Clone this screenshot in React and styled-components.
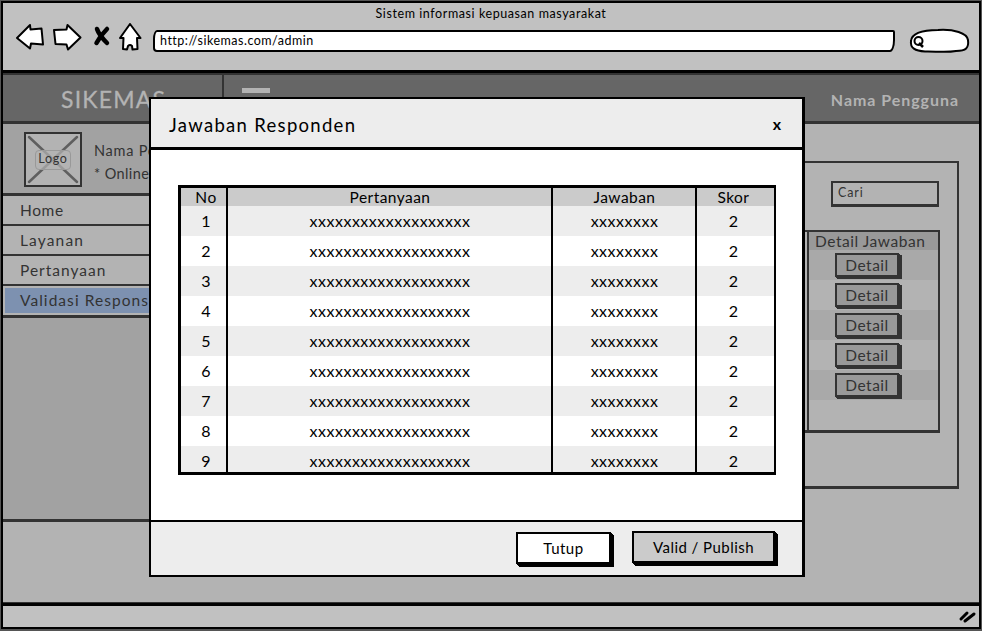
import React from "react";
import styled, { createGlobalStyle } from "styled-components";

const Global = createGlobalStyle`
  *, *::before, *::after { box-sizing: border-box; }
  body { margin: 0; background: #fff; overflow: hidden; }
  body, button, input { font-family: Lato, "Open Sans", sans-serif; }
`;

const Text = styled.span`
  display: block;
  white-space: nowrap;
  font-size: ${(p) => p.$size || 16}px;
  letter-spacing: ${(p) => p.$ls || 0}px;
  font-weight: ${(p) => p.$weight || 400};
  line-height: 20px;
`;

/* Browser window */
const Window = styled.div`
  width: 982px;
  height: 631px;
  padding: 1px 1px 2px;
  background: #555;
`;
const Frame = styled.div`
  position: relative;
  width: 980px;
  height: 628px;
  border: 2px solid #000;
  display: flex;
  flex-direction: column;
  overflow: hidden;
`;
const Chrome = styled.header`
  height: 70px;
  flex: none;
  background: #c1c1c1;
  border-bottom: 3px solid #000;
`;
const WindowTitle = styled.div`
  height: 20px;
  display: flex;
  justify-content: center;

  ${Text} { line-height: 22px; }
`;
const Toolbar = styled.div`
  display: flex;
  align-items: flex-start;
  height: 40px;
`;
const NavIcons = styled.svg`
  display: block;
  width: 150px;
  height: 40px;
  flex: none;
`;
const AddressBar = styled.div`
  margin: 7px 0 0 0;
  width: 742px;
  height: 22px;
  border: 2px solid #000;
  border-radius: 4px 2px 5px 4px / 9px 2px 12px 4px;
  background: #fff;
  padding: 0 0 0 5px;
  line-height: 18px;

  ${Text} { line-height: 18px; }
`;
const SearchIcon = styled.svg`
  display: block;
  width: 64px;
  height: 32px;
  margin: 2px 0 0 13px;
`;
const StatusBar = styled.footer`
  height: 24px;
  flex: none;
  border-top: 3px solid #000;
  background: #c1c1c1;
  display: flex;
  justify-content: flex-end;
`;
const Grip = styled.svg`
  display: block;
  width: 22px;
  height: 20px;
`;

/* Admin page */
const Page = styled.main`
  flex: 1;
  min-height: 0;
  display: flex;
  flex-direction: column;
  background: #b3b3b3;
  color: #333;
  border-bottom: 1px solid #333;
`;
const TopBar = styled.div`
  height: 51px;
  flex: none;
  display: flex;
  background: #666;
  color: #b3b3b3;
  border-top: 2px solid #333;
  border-bottom: 3px solid #333;
`;
const Brand = styled.div`
  width: 221px;
  border-right: 2px solid #333;
  padding: 14px 0 0 58px;
  -webkit-text-stroke: 0.3px currentColor;
`;
const MenuDash = styled.div`
  width: 28px;
  height: 5px;
  margin: 13px 0 0 18px;
  background: #b3b3b3;
`;
const UserName = styled.div`
  margin-left: auto;
  padding: 15px 20px 0 0;
`;
const Main = styled.div`
  flex: 1;
  min-height: 0;
  display: flex;
`;
const Sidebar = styled.aside`
  width: 221px;
  height: 398px;
  background: #a2a2a2;
  border-bottom: 3px solid #333;
`;
const Profile = styled.div`
  height: 70px;
  display: flex;
  padding: 8px 0 0 21px;
  border-bottom: 1px solid #333;
`;
const LogoBox = styled.div`
  width: 58px;
  height: 55px;
  border: 2px solid #333;
  background: #b3b3b3;
  display: grid;
  place-items: center;
`;
const Cross = styled.svg`
  grid-area: 1 / 1;
  width: 54px;
  height: 51px;
`;
const LogoCaption = styled.div`
  grid-area: 1 / 1;
  width: 36px;
  height: 20px;
  border: 1px solid #999;
  border-radius: 4px;
  background: rgba(179, 179, 179, 0.7);
  display: flex;
  justify-content: center;

  ${Text} { line-height: 15px; }
`;
const ProfileText = styled.div`
  padding: 9px 0 0 12px;
  display: flex;
  flex-direction: column;
  gap: 3px;
`;
const MenuItem = styled.div`
  height: 30px;
  padding: 4px 0 0 17px;
  background: #b3b3b3;
  border-top: 2px solid #333;
`;
const ActiveItem = styled(MenuItem)`
  height: 34px;
  padding: 2px 0 2px 2px;
  border-bottom: 3px solid #333;
`;
const Highlight = styled.div`
  height: 25px;
  background: #7d91b0;
  padding: 2px 0 0 15px;
`;
const Content = styled.section`
  flex: 1;
  padding: 37px 20px 0 20px;
`;
const Panel = styled.div`
  height: 328px;
  border: 2px solid #333;
  border-bottom-width: 3px;
  padding: 18px 17px 0;
  display: flex;
  flex-direction: column;
  align-items: flex-end;
`;
const SearchField = styled.div`
  width: 108px;
  height: 26px;
  margin-right: 1px;
  border: 2px solid #333;
  border-bottom-width: 3px;
  padding: 0 0 0 5px;
`;
const DetailTable = styled.div`
  width: 600px;
  height: 203px;
  margin-top: 23px;
  border: 2px solid #333;
  border-bottom-width: 3px;
  display: grid;
  grid-template-columns: 1fr 131px;
`;
const DetailColumn = styled.div`
  border-left: 2px solid #333;
`;
const DetailHead = styled.div`
  height: 18px;
  background: #999;
  padding: 0 0 0 6px;

  ${Text} { line-height: 18px; }
`;
const DetailRow = styled.div`
  height: 30px;
  background: ${(p) => (p.$odd ? "#a9a9a9" : "#b3b3b3")};
  padding: 3px 0 0 26px;
`;
const DetailButton = styled.div`
  width: 64px;
  height: 24px;
  border: 2px solid #333;
  background: #999;
  box-shadow: 1px 1px 0 #333, 2px 2px 0 #333, 3px 2px 0 #333;
  display: flex;
  justify-content: center;
`;

/* Modal */
const Modal = styled.div`
  position: absolute;
  left: 146px;
  top: 94px;
  width: 656px;
  height: 480px;
  border: 2px solid #000;
  border-right-width: 3px;
  background: #fff;
  color: #000;
  display: flex;
  flex-direction: column;
`;
const ModalHead = styled.div`
  height: 51px;
  flex: none;
  background: #ededed;
  border-bottom: 3px solid #000;
  display: flex;
  justify-content: space-between;
  padding: 16px 21px 0 18px;
`;
const CloseMark = styled.div`
  margin-top: -1px;
`;
const ModalBody = styled.div`
  flex: 1;
  padding: 35px 26px 0 27px;
`;
const AnswerTable = styled.div`
  height: 290px;
  border: 3px solid #000;
  border-right-width: 2px;
  display: grid;
  grid-template-columns: 45px 325px 144px 1fr;
`;
const Column = styled.div`
  min-width: 0;
  height: 284px;
  overflow: hidden;
  border-left: ${(p) => (p.$first ? "0" : "2px solid #000")};
`;
const Cell = styled.div`
  height: ${(p) => (p.$head ? 18 : 30)}px;
  background: ${(p) => (p.$head ? "#cbcbcb" : p.$odd ? "#ededed" : "#fff")};
  display: flex;
  justify-content: center;
  align-items: center;
  padding-left: ${(p) => p.$left || 0}px;
  padding-right: ${(p) => p.$right || 0}px;
`;
const ModalFoot = styled.div`
  height: 55px;
  flex: none;
  background: #ededed;
  border-top: 2px solid #000;
  display: flex;
  justify-content: flex-end;
  align-items: flex-start;
  gap: 21px;
  padding: 9px 27px 0 0;
`;
const Button = styled.div`
  width: ${(p) => p.$w}px;
  height: 32px;
  margin-top: ${(p) => p.$drop || 0}px;
  border: 2px solid #000;
  background: ${(p) => p.$bg};
  box-shadow: 1px 1px 0 #000, 2px 2px 0 #000, 3px 3px 0 #000;
  display: flex;
  justify-content: center;
  padding-top: 4px;
`;

const numbers = [1, 2, 3, 4, 5, 6, 7, 8, 9];
const columns = [
  { head: "No", value: (n) => n, left: 5 },
  { head: "Pertanyaan", value: () => "xxxxxxxxxxxxxxxxxxx", ls: 0.5, left: 1 },
  { head: "Jawaban", value: () => "xxxxxxxx", ls: 0.5, left: 1 },
  { head: "Skor", value: () => "2", right: 4 },
];
const menu = [
  { label: "Home", ls: 0.6 },
  { label: "Layanan", ls: 1.15 },
  { label: "Pertanyaan", ls: 1 },
];

export default function App() {
  return (
    <Window>
      <Global />
      <Frame>
        <Chrome>
          <WindowTitle>
            <Text $size={12.5} $ls={0.58}>Sistem informasi kepuasan masyarakat</Text>
          </WindowTitle>
          <Toolbar>
            <NavIcons viewBox="3 23 150 40" fill="#fff" stroke="#000" strokeWidth="2" strokeLinejoin="round" strokeLinecap="round">
              <path d="M17 38 L30 25 L30.500 29.500 L41.500 28.500 L43 44.500 L31 43.500 L30 48.500 Z" />
              <path d="M54 30 L66.500 29.500 L67.500 25 L80.500 37.500 L68 49.500 L66.500 44.500 L55.500 44 Z" />
              <path d="M97 29 C99 35 103 39 107 43 M107 29 C103 33 99 38 96.500 43" strokeWidth="4.500" />
              <path d="M130 24 L140.500 38 L137 38 L137.500 49 L132.500 49.500 L132 46 Q130 44 128 46 L127 49.500 L123 49 L123.500 38 L120 38 Z" />
            </NavIcons>
            <AddressBar>
              <Text $size={12.5} $ls={0.5}>http://sikemas.com/admin</Text>
            </AddressBar>
            <SearchIcon viewBox="908 25 64 32" fill="#fff" stroke="#000" strokeWidth="2">
              <path d="M911 41 C912 32 924 30 938 30 C954 29 967 33 968 40 C969 48 966 51 956 51 C945 53 934 51 925 51.500 C915 51 910 48 911 41 Z" />
              <circle cx="918.500" cy="41" r="4" />
              <path d="M919 43 L923 47" strokeWidth="2.500" />
            </SearchIcon>
          </Toolbar>
        </Chrome>
        <Page>
          <TopBar>
            <Brand><Text $size={23} $ls={1.2}>SIKEMAS</Text></Brand>
            <MenuDash />
            <UserName><Text $size={16} $ls={0.95} $weight={700}>Nama Pengguna</Text></UserName>
          </TopBar>
          <Main>
            <Sidebar>
              <Profile>
                <LogoBox>
                  <Cross viewBox="0 0 54 51" stroke="#5f5f5f" strokeWidth="2.500" strokeLinecap="round">
                    <path d="M3 3 L51 48 M51 3 L3 48" />
                  </Cross>
                  <LogoCaption><Text $size={12.5} $ls={0.7}>Logo</Text></LogoCaption>
                </LogoBox>
                <ProfileText>
                  <Text $size={14.5} $ls={0.75}>Nama Pengguna</Text>
                  <Text $size={14.5} $ls={0.4}>* Online</Text>
                </ProfileText>
              </Profile>
              {menu.map((m) => (
                <MenuItem key={m.label}><Text $size={15.5} $ls={m.ls}>{m.label}</Text></MenuItem>
              ))}
              <ActiveItem>
                <Highlight><Text $size={15.5} $ls={1.05}>Validasi Responsden</Text></Highlight>
              </ActiveItem>
            </Sidebar>
            <Content>
              <Panel>
                <SearchField><Text $size={12.5} $ls={0.9}>Cari</Text></SearchField>
                <DetailTable>
                  <div />
                  <DetailColumn>
                    <DetailHead><Text $size={15.5} $ls={0.55}>Detail Jawaban</Text></DetailHead>
                    {numbers.slice(0, 5).map((n) => (
                      <DetailRow key={n} $odd={n % 2 === 1}>
                        <DetailButton><Text $size={15.5} $ls={0.5}>Detail</Text></DetailButton>
                      </DetailRow>
                    ))}
                  </DetailColumn>
                </DetailTable>
              </Panel>
            </Content>
          </Main>
        </Page>
        <StatusBar>
          <Grip viewBox="0 0 22 20" stroke="#000" strokeWidth="3" strokeLinecap="round">
            <path d="M4 13 L10 7 M8 15 L17 8" />
          </Grip>
        </StatusBar>
        <Modal role="dialog">
          <ModalHead>
            <Text $size={18.5} $ls={1.3}>Jawaban Responden</Text>
            <CloseMark><Text $size={16} $weight={700}>x</Text></CloseMark>
          </ModalHead>
          <ModalBody>
            <AnswerTable>
              {columns.map((c, i) => (
                <Column key={c.head} $first={i === 0}>
                  <Cell $head $left={c.left} $right={c.right}><Text $size={15.5} $ls={0.45}>{c.head}</Text></Cell>
                  {numbers.map((n) => (
                    <Cell key={n} $odd={n % 2 === 1} $left={c.left} $right={c.right}>
                      <Text $size={16} $ls={c.ls}>{c.value(n)}</Text>
                    </Cell>
                  ))}
                </Column>
              ))}
            </AnswerTable>
          </ModalBody>
          <ModalFoot>
            <Button $w={95} $bg="#fff" $drop={1}><Text $size={15} $ls={0.5}>Tutup</Text></Button>
            <Button $w={143} $bg="#cbcbcb"><Text $size={15} $ls={0.45}>Valid / Publish</Text></Button>
          </ModalFoot>
        </Modal>
      </Frame>
    </Window>
  );
}
